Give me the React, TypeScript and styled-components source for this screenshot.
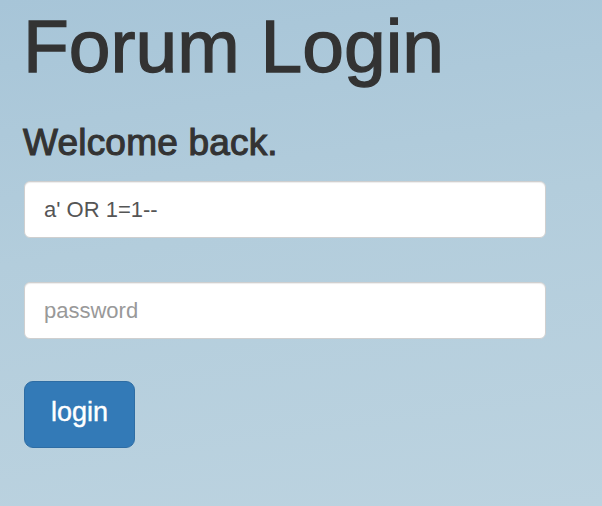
import React from "react";
import styled, { createGlobalStyle } from "styled-components";

const GlobalStyle = createGlobalStyle`
  html, body {
    margin: 0;
    padding: 0;
    height: 100%;
  }
  body {
    font-family: "Liberation Sans", Arial, Helvetica, sans-serif;
    color: #333;
    background: linear-gradient(172deg, #a7c5d8 0%, #b3cddc 45%, #bcd3e0 100%);
    background-attachment: fixed;
    min-height: 506px;
  }
`;

const Page = styled.div`
  padding: 5px 22px 0 23px;
`;

const Title = styled.h1`
  margin: 0;
  font-size: 75px;
  font-weight: 400;
  line-height: 1.1;
  -webkit-text-stroke: 1.3px #333;
`;

const Subtitle = styled.h3`
  margin: 35px 0 0 0;
  font-size: 37px;
  font-weight: 400;
  line-height: 1.1;
  letter-spacing: 0.2px;
  -webkit-text-stroke: 1.1px #333;
`;

const Form = styled.form`
  display: flex;
  flex-direction: column;
  align-items: flex-start;
  margin: 18px 0 0 1px;
`;

const Field = styled.input`
  box-sizing: border-box;
  width: 522px;
  height: 57px;
  margin-bottom: 44px;
  padding: 0 19px;
  border: 1px solid #cfcfcf;
  border-radius: 6px;
  background: #fff;
  box-shadow: inset 0 1px 1px rgba(0, 0, 0, 0.075);
  font-family: "Liberation Sans", Arial, Helvetica, sans-serif;
  font-size: 22px;
  color: #555;
  outline: none;

  &::placeholder {
    color: #999;
  }

  & + & {
    margin-bottom: 42px;
  }
`;

const Button = styled.button`
  box-sizing: border-box;
  width: 111px;
  height: 67px;
  padding: 0 0 4px 0;
  border: 1px solid #2e6da4;
  border-radius: 9px;
  background: #337ab7;
  color: #fff;
  font-family: "Liberation Sans", Arial, Helvetica, sans-serif;
  font-size: 27px;
  -webkit-text-stroke: 0.4px #fff;
  cursor: pointer;
`;

export default function App() {
  return (
    <>
      <GlobalStyle />
      <Page>
        <Title>Forum Login</Title>
        <Subtitle>Welcome back.</Subtitle>
        <Form onSubmit={(e) => e.preventDefault()}>
          <Field type="text" defaultValue="a' OR 1=1--" />
          <Field type="password" placeholder="password" />
          <Button type="submit">login</Button>
        </Form>
      </Page>
    </>
  );
}
